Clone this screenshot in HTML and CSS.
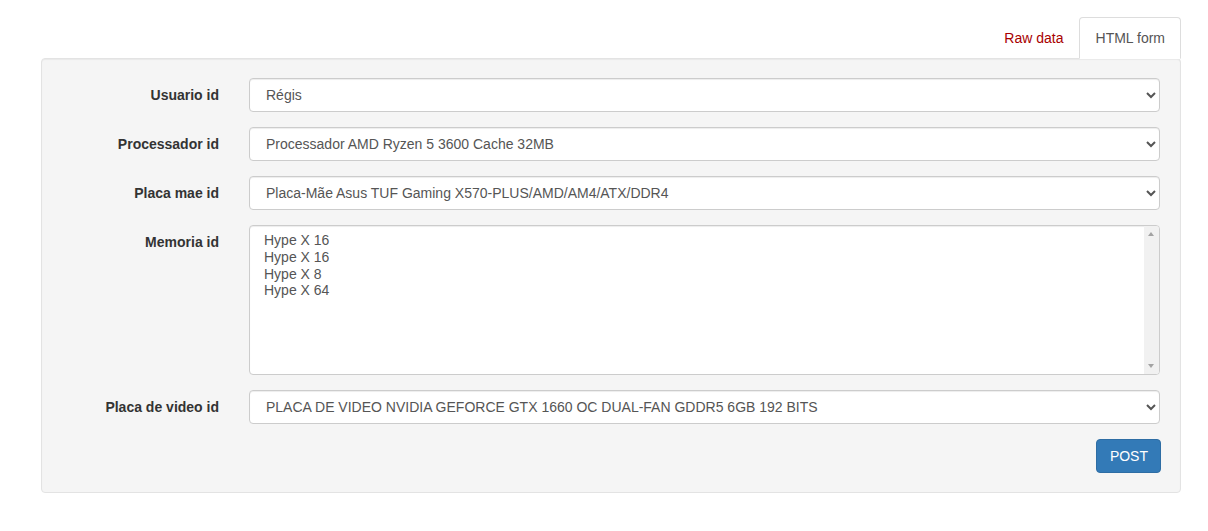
FILE: index.html
```html
<!DOCTYPE html>
<html lang="pt">
<head>
<meta charset="utf-8">
<title>Form</title>
<link rel="stylesheet" href="styles.css">
</head>
<body>
<div class="page">
  <ul class="tabs">
    <li class="tab"><a href="#" class="tab-link">Raw data</a></li>
    <li class="tab tab-active"><a href="#" class="tab-link">HTML form</a></li>
  </ul>
  <div class="well">
    <form class="form">
      <div class="form-row">
        <label class="form-label">Usuario id</label>
        <div class="form-field">
          <select class="form-control"><option>Régis</option></select>
        </div>
      </div>
      <div class="form-row">
        <label class="form-label">Processador id</label>
        <div class="form-field">
          <select class="form-control"><option>Processador AMD Ryzen 5 3600 Cache 32MB</option></select>
        </div>
      </div>
      <div class="form-row">
        <label class="form-label">Placa mae id</label>
        <div class="form-field">
          <select class="form-control"><option>Placa-Mãe Asus TUF Gaming X570-PLUS/AMD/AM4/ATX/DDR4</option></select>
        </div>
      </div>
      <div class="form-row">
        <label class="form-label">Memoria id</label>
        <div class="form-field multi-field">
          <select class="form-control form-multi" multiple>
            <option>Hype X 16</option>
            <option>Hype X 16</option>
            <option>Hype X 8</option>
            <option>Hype X 64</option>
          </select>
          <div class="scrollbar" aria-hidden="true">
            <span class="arrow arrow-up"></span>
            <span class="arrow arrow-down"></span>
          </div>
        </div>
      </div>
      <div class="form-row">
        <label class="form-label">Placa de video id</label>
        <div class="form-field">
          <select class="form-control"><option>PLACA DE VIDEO NVIDIA GEFORCE GTX 1660 OC DUAL-FAN GDDR5 6GB 192 BITS</option></select>
        </div>
      </div>
      <div class="form-actions">
        <button type="button" class="btn-primary">POST</button>
      </div>
    </form>
  </div>
</div>
</body>
</html>
```
FILE: styles.css
```css
* { box-sizing: border-box; }
html, body { margin: 0; padding: 0; background: #fff; }
body {
  font-family: "Liberation Sans", Arial, Helvetica, sans-serif;
  font-size: 14px;
  line-height: 1.428571;
  color: #333;
}
.page {
  width: 1140px;
  margin-left: 41px;
  padding-top: 17px;
}
.tabs {
  list-style: none;
  margin: 0 0 -1px 0;
  padding: 0;
  display: flex;
  justify-content: flex-end;
  position: relative;
  z-index: 1;
}
.tab-link {
  display: block;
  padding: 10px 14px 10px 15px;
  line-height: 20px;
  border: 1px solid transparent;
  border-radius: 4px 4px 0 0;
  color: #a80000;
  text-decoration: none;
}
.tab-active .tab-link {
  color: #555;
  background: #fff;
  padding: 10px 15px 10px 16px;
  border-color: #ddd #ddd transparent;
}
.well {
  background: #f5f5f5;
  border: 1px solid #e3e3e3;
  border-radius: 4px;
  box-shadow: inset 0 1px 1px rgba(0,0,0,.05);
  padding: 19px;
}
.form-row {
  display: flex;
  margin-bottom: 15px;
}
.form-label {
  width: 158px;
  flex: none;
  text-align: right;
  font-weight: bold;
  padding-top: 7px;
  line-height: 20px;
}
.form-field {
  flex: 1;
  padding-left: 30px;
  padding-right: 1px;
}
.multi-field { position: relative; }
.form-control {
  display: block;
  width: 100%;
  height: 34px;
  padding: 6px 12px;
  font-family: inherit;
  font-size: 14px;
  line-height: 1.428571;
  color: #555;
  background-color: #fff;
  border: 1px solid #ccc;
  border-radius: 4px;
  box-shadow: inset 0 1px 1px rgba(0,0,0,.075);
}
.form-multi {
  height: 150px;
  padding: 6px 0 6px 12px;
}
.form-multi option { padding: 0 2px; }
.scrollbar {
  position: absolute;
  top: 1px;
  bottom: 1px;
  right: 2px;
  width: 15px;
  background: #f1f1f1;
  border-radius: 0 3px 3px 0;
}
.arrow {
  position: absolute;
  left: 4px;
  width: 0;
  height: 0;
  border-left: 3.5px solid transparent;
  border-right: 3.5px solid transparent;
}
.arrow-up {
  top: 6px;
  border-bottom: 4px solid #a3a3a3;
}
.arrow-down {
  bottom: 6px;
  border-top: 4px solid #a3a3a3;
}
.form-actions {
  display: flex;
  justify-content: flex-end;
}
.btn-primary {
  font-family: inherit;
  font-size: 14px;
  line-height: 20px;
  padding: 6px 12px 6px 13px;
  color: #fff;
  background: #337ab7;
  border: 1px solid #2e6da4;
  border-radius: 4px;
  cursor: pointer;
}
```
